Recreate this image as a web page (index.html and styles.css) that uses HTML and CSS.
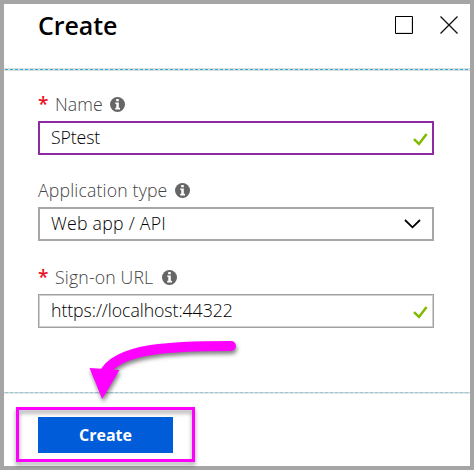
FILE: index.html
```html
<!DOCTYPE html>
<html lang="en">
<head>
<meta charset="utf-8">
<title>Create</title>
<link rel="stylesheet" href="styles.css">
</head>
<body>
<svg class="defs" width="0" height="0">
  <symbol id="info" viewBox="0 0 15 15"><circle cx="7.5" cy="7.5" r="7.5" fill="#666"/><path d="M6.2 2h2.6v2.2H6.2zM5.3 5.5h3.5v5.3H10v1.6H5.2v-1.6h1.1V7h-1z" fill="#fff"/></symbol>
  <symbol id="check" viewBox="0 0 15 13"><path d="M1 6.2 6 11 13.6 1" fill="none" stroke="#7fba00" stroke-width="2.5"/></symbol>
</svg>
<main class="panel">
  <header class="header">
    <h1 class="title">Create</h1>
    <svg class="maximize" width="18" height="18" viewBox="0 0 18 18"><path d="M.5.5h17v17H.5z" fill="none" stroke="#000"/><path d="M1.5 16.5h15v-15" fill="none" stroke="#ddd"/></svg>
    <svg class="close" width="18" height="18" viewBox="0 0 18 18"><path d="M.5.5l17 17M17.5.5l-17 17" fill="none" stroke="#111" stroke-width="1.3"/></svg>
  </header>
  <svg class="rule" width="466" height="3"><path d="M0 1.5h466" stroke="#ddd" stroke-width="3"/><path d="M1 1.5h465" stroke="#1eb4e6" stroke-dasharray="3 2"/></svg>
  <form class="form">
    <div class="label"><span class="required">*</span><span class="t-name">Name</span><svg class="info"><use href="#info"/></svg></div>
    <div class="field focused"><span class="t-value">SPtest</span><svg class="check"><use href="#check"/></svg></div>
    <div class="label"><span class="t-type">Application type</span><svg class="info"><use href="#info"/></svg></div>
    <div class="field select"><span class="t-app">Web app / API</span><svg class="chevron" width="17" height="10" viewBox="0 0 17 10"><path d="M1 1l7.5 7.3L16 1" fill="none" stroke="#000" stroke-width="1.8"/></svg></div>
    <div class="label"><span class="required">*</span><span class="t-url">Sign-on URL</span><svg class="info"><use href="#info"/></svg></div>
    <div class="field input"><span class="t-link">https://localhost:44322</span><svg class="check"><use href="#check"/></svg></div>
  </form>
  <svg class="rule" width="466" height="2"><path d="M0 1h466" stroke="#e5e5e8" stroke-width="2"/><path d="M0 .5h466" stroke="#d5d8d5"/><path d="M1 .5h465" stroke="#8fcbd8" stroke-dasharray="3 2"/></svg>
  <footer class="footer"><button class="create" type="button">Create</button></footer>
</main>
<div class="highlight"></div>
<svg class="arrow" width="160" height="80" viewBox="0 0 160 80"><path d="M151 16C91 16 37 18 24 44" fill="none" stroke="#f0f" stroke-width="10" stroke-linecap="round"/><path d="M9.5 38l30 2-17.3 29z" fill="#f0f"/></svg>
</body>
</html>
```
FILE: styles.css
```css
* { box-sizing: border-box; }
body { margin: 0; width: 474px; height: 470px; overflow: hidden; font: 300 17.7px/24px "Open Sans", "Noto Sans", sans-serif; color: #000; }
.defs { position: absolute; }
svg { display: block; flex: none; }
.panel { width: 474px; height: 470px; border: 4px solid #a5a5a5; background: #fff; display: flex; flex-direction: column; }
.header { height: 64px; padding: 0 12px 0 34px; display: flex; align-items: flex-start; }
.title { margin: 3px auto 0 0; font-size: 25px; line-height: 36px; font-weight: 600; letter-spacing: -.1px; }
.maximize { margin: 12px 27px 0 0; }
.close { margin-top: 12px; }
.form { height: 321px; padding: 21px 36px 0 34px; }
.label { height: 29px; display: flex; align-items: flex-start; color: #444; white-space: nowrap; }
.required { width: 17px; color: #e81123; font-size: 19px; font-weight: 600; line-height: 24px; }
.info { width: 15px; height: 15px; margin: 5px 0 0 8px; }
.field { height: 34px; border: 2px solid #a6a6a6; padding: 0 4px 0 12px; display: flex; align-items: center; justify-content: space-between; line-height: 26px; margin-bottom: 23px; white-space: nowrap; }
.field span { margin: -2px 0 0 -1px; }
.focused { border-color: #8b2aa3; }
.select { padding-right: 11px; margin-bottom: 24px; }
.input { border-width: 1px; border-color: #a0a0a0; box-shadow: inset 0 0 0 1px #d0d0d0; padding: 0 5px 0 13px; }
.check { width: 15px; height: 13px; margin-top: 2px; }
.t-name { width: 47px; letter-spacing: .1px; }
.t-type { width: 129px; letter-spacing: .15px; }
.t-url { width: 99px; letter-spacing: .15px; }
.t-app { letter-spacing: .25px; }
.t-link { letter-spacing: -.06px; }
.t-value { letter-spacing: -.1px; }
.footer { flex: 1; padding: 23px 34px 0; }
.create { display: block; width: 135px; height: 36px; padding: 0 0 1px; border: 0; background: #015cda; color: #fff; font: 700 16px/34px "Open Sans", sans-serif; }
.highlight { position: absolute; left: 16px; top: 407px; width: 179px; height: 55px; border: 3px solid #f0f; filter: drop-shadow(0 3px 2px rgba(0,0,0,.4)); }
.arrow { position: absolute; left: 80px; top: 330px; filter: drop-shadow(1px 3px 2px rgba(0,0,0,.5)); }
```
